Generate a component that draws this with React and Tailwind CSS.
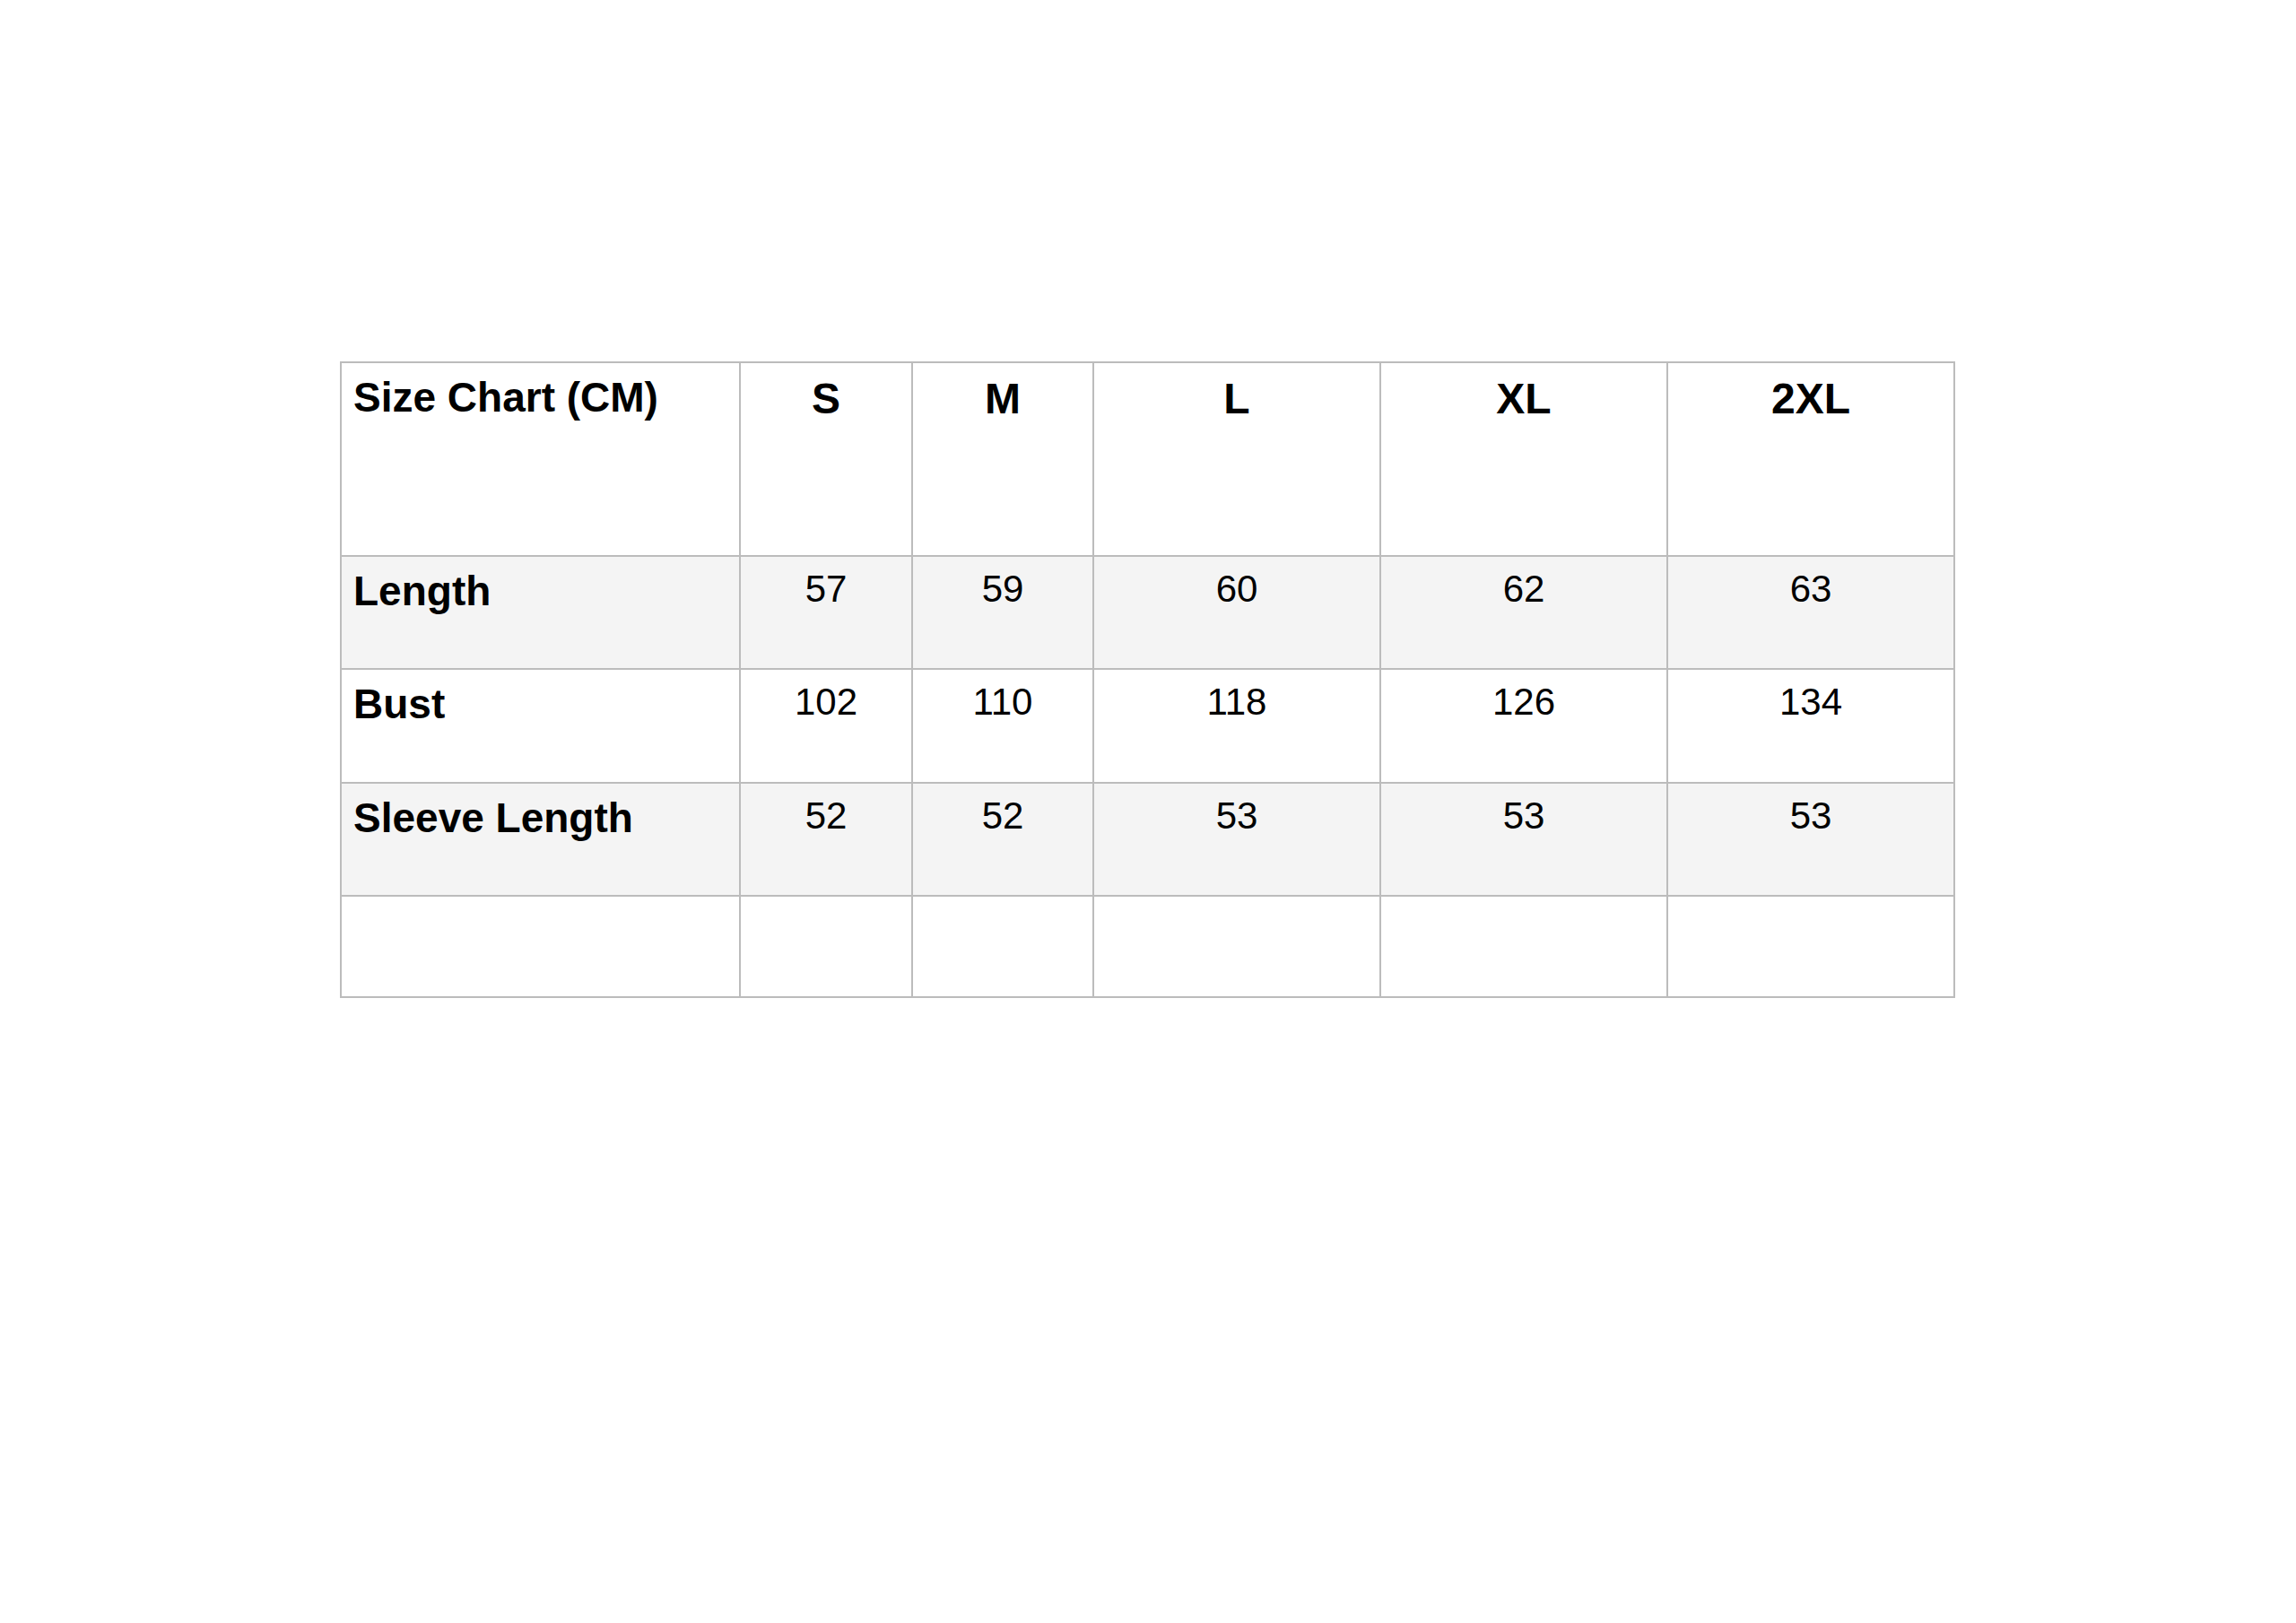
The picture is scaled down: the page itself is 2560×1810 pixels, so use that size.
export default function App() {
  const cols = ["S", "M", "L", "XL", "2XL"];
  const widths = ["w-[445px]", "w-[192px]", "w-[202px]", "w-[320px]", "w-[320px]", "w-[320px]"];
  const rows = [
    { label: "Length", vals: ["57", "59", "60", "62", "63"], bg: "bg-[#f4f4f4]", h: "h-[126px]" },
    { label: "Bust", vals: ["102", "110", "118", "126", "134"], bg: "bg-white", h: "h-[127px]" },
    { label: "Sleeve Length", vals: ["52", "52", "53", "53", "53"], bg: "bg-[#f4f4f4]", h: "h-[126px]" },
    { label: "", vals: ["", "", "", "", ""], bg: "bg-white", h: "h-[113px]" },
  ];
  const cell = "border-2 border-[#bcbcbc] align-top pt-[12px]";
  return (
    <div
      className="w-[2560px] min-h-[1810px] bg-white pt-[403px] pl-[379px] text-black"
      style={{ fontFamily: '"Liberation Sans", Arial, sans-serif' }}
    >
      <table className="border-collapse table-fixed">
        <thead>
          <tr className="h-[216px]">
            <th className={`${cell} ${widths[0]} text-left pl-[13px] text-[46px] font-bold leading-[1.15]`}>
              Size Chart (CM)
            </th>
            {cols.map((c, i) => (
              <th key={c} className={`${cell} ${widths[i + 1]} text-center text-[48px] font-bold leading-[1.15]`}>
                {c}
              </th>
            ))}
          </tr>
        </thead>
        <tbody>
          {rows.map((r, ri) => (
            <tr key={ri} className={`${r.h} ${r.bg}`}>
              <td className={`${cell} text-left pl-[13px] text-[46px] font-bold leading-[1.15]`}>{r.label}</td>
              {r.vals.map((v, vi) => (
                <td key={vi} className={`${cell} text-center text-[42px] font-normal leading-[1.15]`}>
                  {v}
                </td>
              ))}
            </tr>
          ))}
        </tbody>
      </table>
    </div>
  );
}
